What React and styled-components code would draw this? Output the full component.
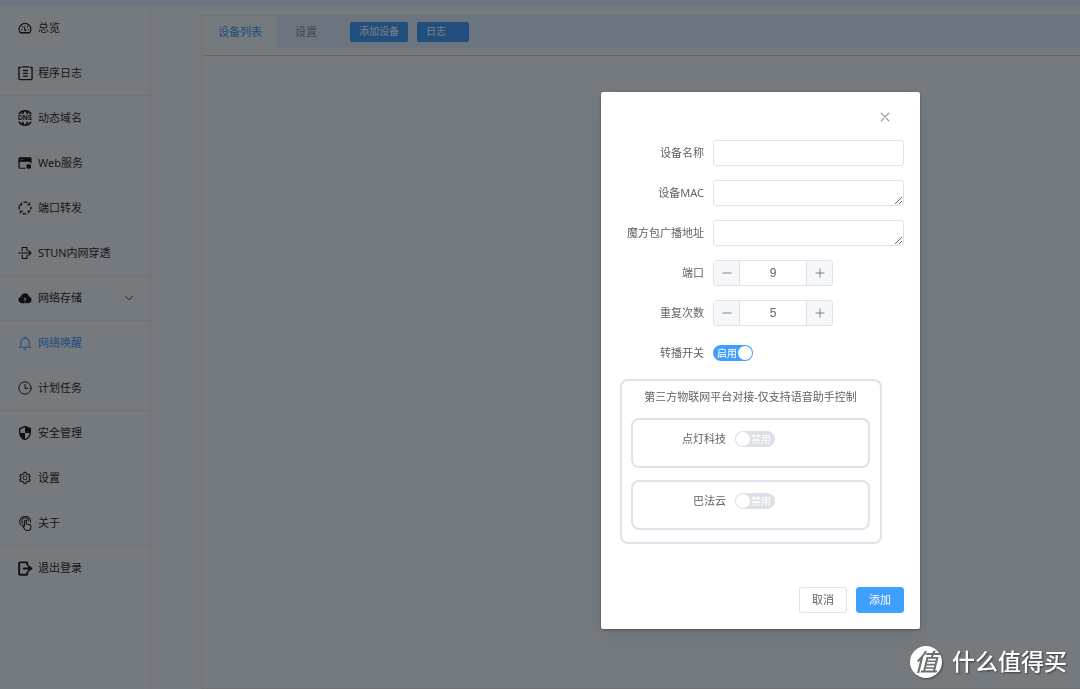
import React, { useState } from "react";
import styled, { createGlobalStyle, css } from "styled-components";
import { MdSecurity } from "react-icons/md";
import { AiOutlineSetting } from "react-icons/ai";

const LINE = "#dfe2e9";

const GlobalStyle = createGlobalStyle`
  *, *::before, *::after { box-sizing: border-box; }
  body {
    margin: 0;
    background: #eaf4fc;
    color: #303133;
    font-family: "Noto Sans", "Noto Sans CJK SC", sans-serif;
    font-size: 11px;
    line-height: 18px;
    overflow: hidden;
  }
  button, input, textarea { font: inherit; color: inherit; }
`;

/* ---------- icons ---------- */

const Svg = styled.svg.attrs({ viewBox: "0 0 16 16", "aria-hidden": true })`
  width: 16px;
  height: 16px;
  fill: none;
  stroke: currentColor;
  stroke-width: ${(p) => p.$w || 1.2};
  stroke-linecap: round;
  stroke-linejoin: round;
`;

const GaugeIcon = () => (
  <Svg $w={1.5}>
    <path d="M2.6 13.4A6.7 6.7 0 1 1 13.4 13.4z" />
    <path d="M8 5.4v.4M5.2 6.4l.3.3M11 6.4l-.4.4M3.9 9.6h.4M11.7 9.6h.4" strokeWidth="1.2" />
    <path d="M7 7.4l1.2 3" strokeWidth="1.2" />
    <circle cx="8.3" cy="10.6" r="0.8" fill="currentColor" strokeWidth="0.4" />
  </Svg>
);
const LogIcon = () => (
  <Svg $w={1.4}>
    <path d="M2.6 1.6H1v11.8q0 1.2 1.2 1.2h11.6q1.2 0 1.2-1.2V1.6h-1.6M4.6 1h6.8M6 4.8h4M6 7.8h4M6 10.8h4" />
  </Svg>
);
const DnsIcon = () => (
  <Svg $w={1.5}>
    <path d="M2.2 3.8a7.2 7.2 0 0 1 11.6 0M2.2 12.2a7.2 7.2 0 0 0 11.6 0M5.6 3.8L6.6 1.6M10.4 3.8L9.4 1.6M5.6 12.2l1 2.2M10.4 12.2l-1 2.2" />
    <text
      x="8"
      y="10.2"
      textAnchor="middle"
      fontFamily="Liberation Sans, Arial, sans-serif"
      fontSize="6.6"
      fontWeight="700"
      fill="currentColor"
      stroke="none"
    >
      DNS
    </text>
  </Svg>
);
const WebIcon = () => (
  <Svg $w={1.4}>
    <path d="M1.2 6V3q0-1 1-1h11.6q1 0 1 1v3z" fill="currentColor" />
    <path d="M1.2 6v7q0 1 1 1H8M14.8 6v2" />
    <path d="M3.2 4h.2M5.4 4h.2" stroke="#eaf4fc" strokeWidth="0.8" />
    <circle cx="12.2" cy="12" r="1.9" fill="currentColor" />
    <path d="M12.2 9.5v5M10 10.8l4.4 2.4M10 13.2l4.4-2.4" strokeWidth="1" />
  </Svg>
);
const ForwardIcon = () => (
  <Svg $w={1.6}>
    <path d="M6.4 1.3h2q1.4.1 2.4.6M14.7 6.6q.2 1.8-.4 3M9.6 14.7H7.6q-1.2 0-2.2-.6M1.3 9.4V7.6q.1-1 .5-2" strokeLinecap="butt" />
    <path d="M13.8 1.6v3.2h-3.2zM11.4 11h3.2l-3.2 3.2zM2.2 14.4v-3.2h3.2zM4.6 1.8V5L1.4 5z" fill="currentColor" strokeWidth="0.3" />
  </Svg>
);
const StunIcon = () => (
  <Svg $w={1.2}>
    <path d="M.8 8h14M12.2 5.4L14.9 8l-2.7 2.6M4.8 5.6V1.8h5.4v4M4.8 10.4v3.8h5.4v-4" />
  </Svg>
);
const CloudIcon = () => (
  <Svg $w={0.6}>
    <path
      fillRule="evenodd"
      fill="currentColor"
      d="M4.2 13.6A3.6 3.6 0 0 1 3.6 6.5a4.5 4.5 0 0 1 8.8 0a3.6 3.6 0 0 1-.6 7.1H8.6V10h1.9L8 7.2 5.5 10h1.9v3.6z"
    />
  </Svg>
);
const BellIcon = () => (
  <Svg $w={1.2}>
    <path d="M3.2 12.6V7.2a4.8 4.8 0 0 1 9.6 0v5.4M1.2 12.8h13.6M8 1v1.2M6.8 14.8q1.2.8 2.4 0" />
  </Svg>
);
const ClockIcon = () => (
  <Svg $w={1.1}>
    <circle cx="8" cy="8" r="7" />
    <path d="M8 4v4.4h3.4" />
  </Svg>
);
const PointerIcon = () => (
  <Svg $w={1.1}>
    <path d="M3.4 9.8A5.7 5.7 0 1 1 13.2 6.8M5.2 7.8A3.4 3.4 0 1 1 11 5.2" />
    <path d="M7 11V5.6q0-1 1-1t1 1v3l3.6.8q1.4.4 1.2 2l-.4 2.2q-.6 1.8-2.4 1.8H9.2q-1.4 0-2-1.2L5 10.8q-.2-1 .8-1z" />
  </Svg>
);
const ExitIcon = () => (
  <Svg $w={2}>
    <path d="M10 4V2.4q0-1-1-1H2.2q-1 0-1 1v11.2q0 1 1 1H9q1 0 1-1V12M6 8h6" />
    <path d="M11.4 5L15.2 8l-3.8 3z" fill="currentColor" strokeWidth="1" />
  </Svg>
);
const ChevronIcon = () => (
  <Svg>
    <path d="M3.4 5.8L8 10.4l4.6-4.6" />
  </Svg>
);
const CloseIcon = () => (
  <Svg $w={1.3}>
    <path d="M3.6 3.6l8.8 8.8M12.4 3.6l-8.8 8.8" />
  </Svg>
);
const MinusIcon = () => (
  <Svg>
    <path d="M2.6 8h10.8" />
  </Svg>
);
const PlusIcon = () => (
  <Svg>
    <path d="M2.6 8h10.8M8 2.6v10.8" />
  </Svg>
);

/* ---------- page ---------- */

const TopBar = styled.header`
  height: 6px;
  background: #d9e8ff;
`;

const Shell = styled.div`
  display: flex;
  min-height: calc(100vh - 6px);
`;

const Sidebar = styled.nav`
  flex: 0 0 151px;
  border-right: 1px solid ${LINE};
`;

const NavLink = styled.a`
  display: flex;
  align-items: center;
  gap: 6px;
  height: 45px;
  padding: 0 15px 0 18px;
  color: ${(p) => (p.$active ? "#409eff" : "#303133")};
  text-decoration: none;
  border-bottom: 1px solid ${(p) => (p.$divided ? LINE : "transparent")};

  > svg {
    width: 12px;
    height: 12px;
    margin-left: auto;
  }
`;

const NavIcon = styled.span`
  display: flex;
  flex: 0 0 14px;
  min-width: 0;
  justify-content: center;
  color: ${(p) => (p.$active ? "#409eff" : "#1d1e1f")};
  svg {
    flex: none;
    width: ${(p) => p.$size || 14}px;
    height: ${(p) => p.$size || 14}px;
  }
`;

const Main = styled.main`
  flex: 1;
  min-width: 0;
  padding: 9px 0 0 50px;
`;

const Panel = styled.section`
  min-height: 100%;
  border: 1px solid ${LINE};
  border-right: 0;
`;

const TabBar = styled.div`
  display: flex;
  align-items: center;
  height: 32px;
  background: #d9e8ff;
`;

const Tab = styled.button`
  height: 32px;
  padding: 0 16px;
  border: 0;
  background: none;
  color: #909399;
  ${(p) =>
    p.$active &&
    css`
      background: #eaf4fc;
      color: #409eff;
      border-right: 1px solid ${LINE};
    `}
`;

const TabActions = styled.div`
  display: flex;
  gap: 9px;
  margin-left: 17px;
`;

const SmallButton = styled.button`
  min-width: 52px;
  height: 20px;
  padding: 0 9px 2px;
  border: 0;
  border-radius: 2px;
  background: #409eff;
  color: #fff;
  font-size: 10px;
  line-height: 18px;
  text-align: left;
`;

const Rule = styled.hr`
  margin: 7px 0 0 2px;
  border: 0;
  border-top: 1px solid #cdd0d6;
`;

/* ---------- dialog ---------- */

const Overlay = styled.div`
  position: fixed;
  inset: 0;
  display: flex;
  align-items: flex-start;
  justify-content: flex-end;
  padding: 92px 160px 0 0;
  background: rgba(0, 0, 0, 0.5);
`;

const Dialog = styled.form`
  width: 319px;
  padding: 0 16px 16px;
  border-radius: 2px;
  background: #fff;
  color: #606266;
  box-shadow: 0 1px 3px rgba(0, 0, 0, 0.3), 0 8px 24px rgba(0, 0, 0, 0.08);
`;

const DialogHead = styled.div`
  display: flex;
  align-items: center;
  justify-content: flex-end;
  height: 48px;
  padding: 2px 12px 0 0;
`;

const CloseButton = styled.button`
  display: flex;
  padding: 0;
  border: 0;
  background: none;
  color: #909399;
  svg {
    width: 14px;
    height: 14px;
  }
`;

const Fields = styled.div`
  display: grid;
  gap: 14px;
`;

const Row = styled.div`
  display: grid;
  grid-template-columns: ${(p) => p.$label || 87}px 1fr;
  column-gap: 9px;
  align-items: center;
  min-height: 26px;
`;

const Label = styled.label`
  text-align: right;
  white-space: nowrap;
`;

const control = css`
  display: block;
  width: 100%;
  height: 26px;
  padding: 3px 9px;
  border: 1px solid ${LINE};
  border-radius: 3px;
  background: #fff;
  outline: none;
`;

const TextInput = styled.input`
  ${control}
`;

const TextArea = styled.textarea`
  ${control}
  resize: vertical;
`;

const Stepper = styled.div`
  display: flex;
  width: 120px;
  height: 26px;
  border: 1px solid ${LINE};
  border-radius: 3px;
  overflow: hidden;
`;

const StepButton = styled.button`
  display: flex;
  align-items: center;
  justify-content: center;
  flex: 0 0 25px;
  padding: 0;
  border: 0;
  background: #f5f7fa;
  color: #73767a;
  svg {
    width: 12px;
    height: 12px;
  }
`;

const StepInput = styled.input`
  flex: 1;
  min-width: 0;
  padding: 0;
  border: solid ${LINE};
  border-width: 0 1px;
  font-family: "Liberation Sans", Arial, sans-serif;
  font-size: 12px;
  text-align: center;
  outline: none;
  appearance: textfield;
  &::-webkit-inner-spin-button {
    display: none;
  }
`;

const SwitchBox = styled.span`
  display: inline-grid;
  width: 40px;
  height: 16px;
  border-radius: 8px;
  background: ${(p) => (p.$on ? "#409eff" : "#dcdfe6")};
`;

const SwitchInput = styled.input`
  grid-area: 1 / 1;
  width: 100%;
  height: 100%;
  margin: 0;
  appearance: none;
  cursor: pointer;
`;

const SwitchFace = styled.span`
  grid-area: 1 / 1;
  display: flex;
  flex-direction: ${(p) => (p.$on ? "row" : "row-reverse")};
  align-items: center;
  justify-content: space-between;
  padding: ${(p) => (p.$on ? "0 1px 0 4px" : "0 4px 0 1px")};
  color: #fff;
  font-size: 10px;
  line-height: 16px;
  pointer-events: none;
  &::after {
    content: "";
    width: 14px;
    height: 14px;
    border-radius: 50%;
    background: #fff;
  }
`;

const Card = styled.section`
  display: grid;
  gap: 12px;
  width: 262px;
  margin: 13px 0 0 3px;
  padding: 7px 10px 12px 9px;
  border: 2px solid ${LINE};
  border-radius: 8px;
`;

const CardTitle = styled.h2`
  margin: 0;
  font-size: 11px;
  font-weight: 400;
  line-height: 18px;
  text-align: center;
`;

const Platform = styled.div`
  height: 50px;
  padding: 6px 0;
  border: 2px solid ${LINE};
  border-radius: 8px;
`;

const DialogFoot = styled.div`
  display: flex;
  justify-content: flex-end;
  gap: 9px;
  margin-top: 43px;
`;

const DialogButton = styled.button`
  width: 48px;
  height: 26px;
  padding: 0;
  border: 1px solid ${(p) => (p.$primary ? "#409eff" : LINE)};
  border-radius: 3px;
  background: ${(p) => (p.$primary ? "#409eff" : "#fff")};
  color: ${(p) => (p.$primary ? "#fff" : "#606266")};
`;

/* ---------- watermark ---------- */

const Watermark = styled.div`
  position: fixed;
  right: 13px;
  bottom: 10px;
  display: flex;
  align-items: center;
  gap: 10px;
  color: #fff;
  font-size: 23px;
  font-weight: 500;
  line-height: 32px;
  font-family: "Noto Sans CJK SC", sans-serif;
  text-shadow: 1px 1px 2px rgba(0, 0, 0, 0.5);
`;

const WatermarkText = styled.span`
  padding-bottom: 3px;
`;

const WatermarkBadge = styled.span`
  width: 32px;
  height: 32px;
  border-radius: 50%;
  background: #fff;
  color: #6b7074;
  font-size: 24px;
  font-style: italic;
  line-height: 30px;
  text-align: center;
  text-shadow: none;
  box-shadow: 1px 1px 2px rgba(0, 0, 0, 0.4);
`;

const NAV = [
  { text: "总览", icon: GaugeIcon },
  { text: "程序日志", icon: LogIcon, size: 15, divided: true },
  { text: "动态域名", icon: DnsIcon, size: 16 },
  { text: "Web服务", icon: WebIcon },
  { text: "端口转发", icon: ForwardIcon },
  { text: "STUN内网穿透", icon: StunIcon, divided: true },
  { text: "网络存储", icon: CloudIcon, divided: true, expandable: true },
  { text: "网络唤醒", icon: BellIcon, active: true },
  { text: "计划任务", icon: ClockIcon, divided: true },
  { text: "安全管理", icon: MdSecurity, size: 16 },
  { text: "设置", icon: AiOutlineSetting },
  { text: "关于", icon: PointerIcon, size: 15, divided: true },
  { text: "退出登录", icon: ExitIcon, size: 15 },
];

function Switch({ id, initial = false }) {
  const [on, setOn] = useState(initial);
  return (
    <SwitchBox $on={on}>
      <SwitchInput id={id} type="checkbox" role="switch" checked={on} onChange={() => setOn(!on)} />
      <SwitchFace $on={on}>{on ? "启用" : "禁用"}</SwitchFace>
    </SwitchBox>
  );
}

function NumberField({ id, initial }) {
  const [value, setValue] = useState(initial);
  return (
    <Stepper>
      <StepButton type="button" aria-label="减少" onClick={() => setValue(value - 1)}>
        <MinusIcon />
      </StepButton>
      <StepInput id={id} type="number" value={value} onChange={(e) => setValue(Number(e.target.value))} />
      <StepButton type="button" aria-label="增加" onClick={() => setValue(value + 1)}>
        <PlusIcon />
      </StepButton>
    </Stepper>
  );
}

export default function App() {
  return (
    <>
      <GlobalStyle />
      <TopBar />
      <Shell>
        <Sidebar>
          {NAV.map(({ text, icon: Icon, size, active, divided, expandable }) => (
            <NavLink key={text} href="#" $active={active} $divided={divided}>
              <NavIcon $size={size} $active={active}>
                <Icon />
              </NavIcon>
              <span>{text}</span>
              {expandable && <ChevronIcon />}
            </NavLink>
          ))}
        </Sidebar>
        <Main>
          <Panel>
            <TabBar>
              <Tab type="button" $active>
                设备列表
              </Tab>
              <Tab type="button">设置</Tab>
              <TabActions>
                <SmallButton type="button">添加设备</SmallButton>
                <SmallButton type="button">日志</SmallButton>
              </TabActions>
            </TabBar>
            <Rule />
          </Panel>
        </Main>
      </Shell>

      <Overlay>
        <Dialog role="dialog" aria-modal="true" onSubmit={(e) => e.preventDefault()}>
          <DialogHead>
            <CloseButton type="button" aria-label="关闭">
              <CloseIcon />
            </CloseButton>
          </DialogHead>
          <Fields>
            <Row>
              <Label htmlFor="name">设备名称</Label>
              <TextInput id="name" type="text" />
            </Row>
            <Row>
              <Label htmlFor="mac">设备MAC</Label>
              <TextArea id="mac" rows={1} />
            </Row>
            <Row>
              <Label htmlFor="broadcast">魔方包广播地址</Label>
              <TextArea id="broadcast" rows={1} />
            </Row>
            <Row>
              <Label htmlFor="port">端口</Label>
              <NumberField id="port" initial={9} />
            </Row>
            <Row>
              <Label htmlFor="repeat">重复次数</Label>
              <NumberField id="repeat" initial={5} />
            </Row>
            <Row>
              <Label htmlFor="relay">转播开关</Label>
              <Switch id="relay" initial />
            </Row>
          </Fields>
          <Card>
            <CardTitle>第三方物联网平台对接-仅支持语音助手控制</CardTitle>
            <Platform>
              <Row $label={93}>
                <Label htmlFor="blinker">点灯科技</Label>
                <Switch id="blinker" />
              </Row>
            </Platform>
            <Platform>
              <Row $label={93}>
                <Label htmlFor="bemfa">巴法云</Label>
                <Switch id="bemfa" />
              </Row>
            </Platform>
          </Card>
          <DialogFoot>
            <DialogButton type="button">取消</DialogButton>
            <DialogButton type="submit" $primary>
              添加
            </DialogButton>
          </DialogFoot>
        </Dialog>
      </Overlay>

      <Watermark>
        <WatermarkBadge>值</WatermarkBadge>
        <WatermarkText>什么值得买</WatermarkText>
      </Watermark>
    </>
  );
}
